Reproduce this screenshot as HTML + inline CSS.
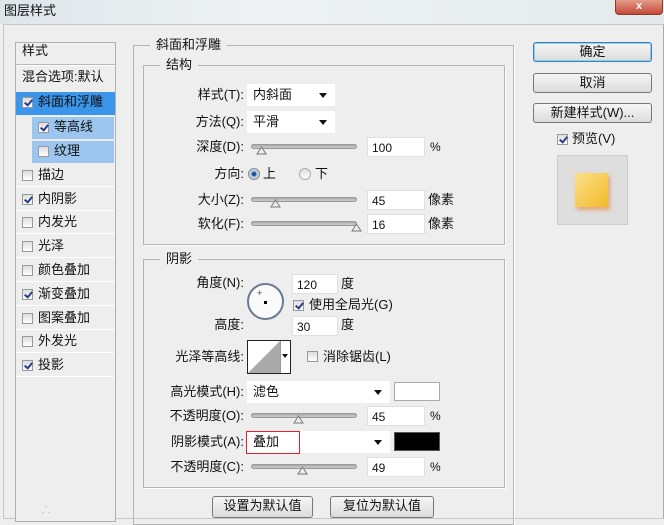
<!DOCTYPE html><html><head><meta charset="utf-8"><style>
*{box-sizing:border-box;margin:0;padding:0}
body{width:664px;height:515px;overflow:hidden;background:#eeeeee;font-family:"Liberation Sans","Noto Sans CJK SC",sans-serif;font-size:12px;color:#111;position:relative}
.a{position:absolute}
.t{position:absolute;white-space:nowrap;line-height:14px}
.r{text-align:right}
.box{position:absolute;border:1px solid #b4b4b4;box-shadow:1px 1px 0 #fff}
.leg{position:absolute;background:#eeeeee;padding:0 6px;font-size:13px;line-height:14px}
.inp{position:absolute;background:#fff;border:1px solid #e0e0e0;height:20px;padding:3px 4px;font-size:12px;line-height:14px}
.dd{position:absolute;background:#fff;height:22px;padding:4px 6px;font-size:13px;line-height:14px}
.dd:after{content:"";position:absolute;right:8px;top:9px;border:4px solid transparent;border-top:5px solid #111}
.sl{position:absolute;height:5px;border-radius:3px;background:linear-gradient(#aaa,#ccc);border:1px solid #999}
.th{position:absolute;width:11px;height:9px}
.cb{position:absolute;width:11px;height:11px;border:1px solid #999;background:linear-gradient(#ddd,#fff)}
.cb.on:after{content:"";position:absolute;left:3px;top:0px;width:3px;height:6px;border:solid #2a3d8c;border-width:0 2px 2px 0;transform:rotate(40deg)}
.row{position:absolute;left:16px;width:98px;height:23px;border-bottom:1px solid #fff;font-size:13px}
.row .cb{left:6px;top:6px}
.row span{position:absolute;left:22px;top:4px;line-height:14px}
.btn{position:absolute;border:1px solid #777;border-radius:3px;background:linear-gradient(#f6f6f6,#dcdcdc);text-align:center;font-size:13px;line-height:18px}
</style></head><body>
<div class="a" style="left:0;top:0;width:664px;height:24px;background:linear-gradient(90deg,#dfe6ea,#eef2f3 40%,#e4eaec)"></div>
<div class="t" style="left:4px;top:4px;font-size:13px">图层样式</div>
<div class="a" style="left:615px;top:-2px;width:48px;height:17px;border-radius:0 0 4px 4px;background:linear-gradient(#e8a090,#c44a36);border:1px solid #8a3a2a;color:#fff;text-align:center;font-size:11px;line-height:14px;font-weight:bold">x</div>
<div class="a" style="left:3px;top:24px;width:661px;height:495px;border:1px solid #c6c6c6;border-right-color:#aaa"></div>

<!-- left panel -->
<div class="a" style="left:15px;top:42px;width:101px;height:480px;border:1px solid #b0b0b0;background:#eeeeee"></div>
<div class="t" style="left:22px;top:44px;font-size:13px">样式</div>
<div class="a" style="left:16px;top:64px;width:99px;height:2px;background:#b8b8b8;border-bottom:1px solid #fff"></div>
<div class="t" style="left:22px;top:70px;font-size:13px">混合选项:默认</div>
<div class="a" style="left:16px;top:92px;width:99px;height:23px;background:#3b95ea"></div>
<div class="cb on" style="left:22px;top:97px"></div><div class="t" style="left:38px;top:95px;font-size:13px">斜面和浮雕</div>
<div class="a" style="left:32px;top:117px;width:82px;height:22px;background:#9cc6ef"></div>
<div class="cb on" style="left:38px;top:122px"></div><div class="t" style="left:54px;top:120px;font-size:13px">等高线</div>
<div class="a" style="left:32px;top:141px;width:82px;height:22px;background:#9cc6ef"></div>
<div class="cb" style="left:38px;top:146px"></div><div class="t" style="left:54px;top:144px;font-size:13px">纹理</div>
<div class="row" style="top:164px"><div class="cb"></div><span>描边</span></div>
<div class="row" style="top:188px"><div class="cb on"></div><span>内阴影</span></div>
<div class="row" style="top:211px"><div class="cb"></div><span>内发光</span></div>
<div class="row" style="top:235px"><div class="cb"></div><span>光泽</span></div>
<div class="row" style="top:259px"><div class="cb"></div><span>颜色叠加</span></div>
<div class="row" style="top:283px"><div class="cb on"></div><span>渐变叠加</span></div>
<div class="row" style="top:307px"><div class="cb"></div><span>图案叠加</span></div>
<div class="row" style="top:330px"><div class="cb"></div><span>外发光</span></div>
<div class="row" style="top:354px"><div class="cb on"></div><span>投影</span></div>
<div class="t" style="left:40px;top:503px;color:#ccc;font-size:12px">∴</div>

<!-- outer frame -->
<div class="box" style="left:133px;top:45px;width:381px;height:480px"></div>
<div class="leg" style="left:150px;top:38px">斜面和浮雕</div>
<div class="box" style="left:143px;top:65px;width:362px;height:180px"></div>
<div class="leg" style="left:160px;top:58px">结构</div>
<div class="box" style="left:143px;top:259px;width:362px;height:229px"></div>
<div class="leg" style="left:160px;top:252px">阴影</div>

<div class="t r" style="left:160px;width:84px;top:88px;font-size:13px">样式(T):</div>
<div class="dd" style="left:247px;top:84px;width:88px">内斜面</div>
<div class="t r" style="left:160px;width:84px;top:115px;font-size:13px">方法(Q):</div>
<div class="dd" style="left:247px;top:111px;width:88px">平滑</div>
<div class="t r" style="left:160px;width:84px;top:140px;font-size:13px">深度(D):</div>
<div class="sl" style="left:251px;top:144px;width:106px"></div>
<svg class="th" style="left:256px;top:146px" viewBox="0 0 11 9"><path d="M1 8 L5.5 1 L10 8Z" fill="#eee" stroke="#777"/></svg>
<div class="inp" style="left:367px;top:137px;width:58px">100</div><div class="t" style="left:430px;top:140px">%</div>
<div class="t r" style="left:160px;width:84px;top:167px;font-size:13px">方向:</div>
<div class="a" style="left:248px;top:168px;width:12px;height:12px;border-radius:50%;background:radial-gradient(#1a4f8a 25%,#8ab8e0 35%,#ddd 70%);border:1px solid #888"></div>
<div class="t" style="left:263px;top:167px;font-size:13px">上</div>
<div class="a" style="left:299px;top:168px;width:12px;height:12px;border-radius:50%;background:linear-gradient(#ddd,#fff);border:1px solid #aaa"></div>
<div class="t" style="left:315px;top:167px;font-size:13px">下</div>
<div class="t r" style="left:160px;width:84px;top:193px;font-size:13px">大小(Z):</div>
<div class="sl" style="left:251px;top:197px;width:106px"></div>
<svg class="th" style="left:270px;top:199px" viewBox="0 0 11 9"><path d="M1 8 L5.5 1 L10 8Z" fill="#eee" stroke="#777"/></svg>
<div class="inp" style="left:367px;top:190px;width:58px">45</div><div class="t" style="left:428px;top:193px;font-size:13px">像素</div>
<div class="t r" style="left:160px;width:84px;top:217px;font-size:13px">软化(F):</div>
<div class="sl" style="left:251px;top:221px;width:106px"></div>
<svg class="th" style="left:351px;top:223px" viewBox="0 0 11 9"><path d="M1 8 L5.5 1 L10 8Z" fill="#eee" stroke="#777"/></svg>
<div class="inp" style="left:367px;top:214px;width:58px">16</div><div class="t" style="left:428px;top:217px;font-size:13px">像素</div>

<div class="t r" style="left:160px;width:84px;top:276px;font-size:13px">角度(N):</div>
<div class="inp" style="left:292px;top:274px;width:46px">120</div><div class="t" style="left:341px;top:277px;font-size:13px">度</div>
<div class="a" style="left:247px;top:283px;width:37px;height:37px;border-radius:50%;border:2px solid #6a7a90;background:#fafafa"></div>
<div class="t" style="left:257px;top:286px;font-size:9px;color:#444">+</div>
<div class="a" style="left:264px;top:301px;width:3px;height:3px;background:#000"></div>
<div class="cb on" style="left:293px;top:300px"></div><div class="t" style="left:309px;top:298px;font-size:13px">使用全局光(G)</div>
<div class="t r" style="left:160px;width:84px;top:318px;font-size:13px">高度:</div>
<div class="inp" style="left:292px;top:316px;width:46px">30</div><div class="t" style="left:341px;top:318px;font-size:13px">度</div>
<div class="t r" style="left:140px;width:104px;top:350px;font-size:13px">光泽等高线:</div>
<div class="a" style="left:247px;top:340px;width:44px;height:34px;border:1px solid #222;background:#fff"></div>
<svg class="a" style="left:248px;top:341px" width="32" height="32"><path d="M0 32 L32 0 L32 32Z" fill="#aaa"/></svg>
<div class="a" style="left:280px;top:341px;width:1px;height:32px;background:#999"></div>
<div class="a" style="left:282px;top:354px;border:3px solid transparent;border-top:4px solid #111"></div>
<div class="cb" style="left:307px;top:351px"></div><div class="t" style="left:323px;top:350px;font-size:13px">消除锯齿(L)</div>
<div class="t r" style="left:140px;width:104px;top:385px;font-size:13px">高光模式(H):</div>
<div class="dd" style="left:247px;top:381px;width:143px">滤色</div>
<div class="a" style="left:394px;top:382px;width:46px;height:19px;background:#fff;border:1px solid #aaa"></div>
<div class="t r" style="left:140px;width:104px;top:409px;font-size:13px">不透明度(O):</div>
<div class="sl" style="left:251px;top:413px;width:106px"></div>
<svg class="th" style="left:293px;top:415px" viewBox="0 0 11 9"><path d="M1 8 L5.5 1 L10 8Z" fill="#eee" stroke="#777"/></svg>
<div class="inp" style="left:367px;top:406px;width:58px">45</div><div class="t" style="left:430px;top:409px">%</div>
<div class="t r" style="left:140px;width:104px;top:435px;font-size:13px">阴影模式(A):</div>
<div class="dd" style="left:247px;top:431px;width:143px">叠加</div>
<div class="a" style="left:246px;top:431px;width:54px;height:23px;border:1px solid #e02030"></div>
<div class="a" style="left:394px;top:432px;width:46px;height:19px;background:#000;border:1px solid #555"></div>
<div class="t r" style="left:140px;width:104px;top:460px;font-size:13px">不透明度(C):</div>
<div class="sl" style="left:251px;top:464px;width:106px"></div>
<svg class="th" style="left:297px;top:466px" viewBox="0 0 11 9"><path d="M1 8 L5.5 1 L10 8Z" fill="#eee" stroke="#777"/></svg>
<div class="inp" style="left:367px;top:457px;width:58px">49</div><div class="t" style="left:430px;top:460px">%</div>

<div class="btn" style="left:212px;top:496px;width:101px;height:22px">设置为默认值</div>
<div class="btn" style="left:330px;top:496px;width:104px;height:22px">复位为默认值</div>

<div class="btn" style="left:533px;top:42px;width:119px;height:20px;border-color:#3c7fb1;box-shadow:inset 0 0 0 1px #8cd0f0">确定</div>
<div class="btn" style="left:533px;top:73px;width:119px;height:20px">取消</div>
<div class="btn" style="left:533px;top:103px;width:119px;height:20px">新建样式(W)...</div>
<div class="cb on" style="left:557px;top:134px"></div><div class="t" style="left:572px;top:132px;font-size:13px">预览(V)</div>
<div class="a" style="left:557px;top:155px;width:71px;height:70px;background:#dedede;border:1px solid #ccc"></div>
<div class="a" style="left:575px;top:173px;width:33px;height:34px;background:linear-gradient(135deg,#fbe18a,#f2b92a);box-shadow:2px 3px 4px rgba(230,130,60,.6)"></div>
</body></html>
